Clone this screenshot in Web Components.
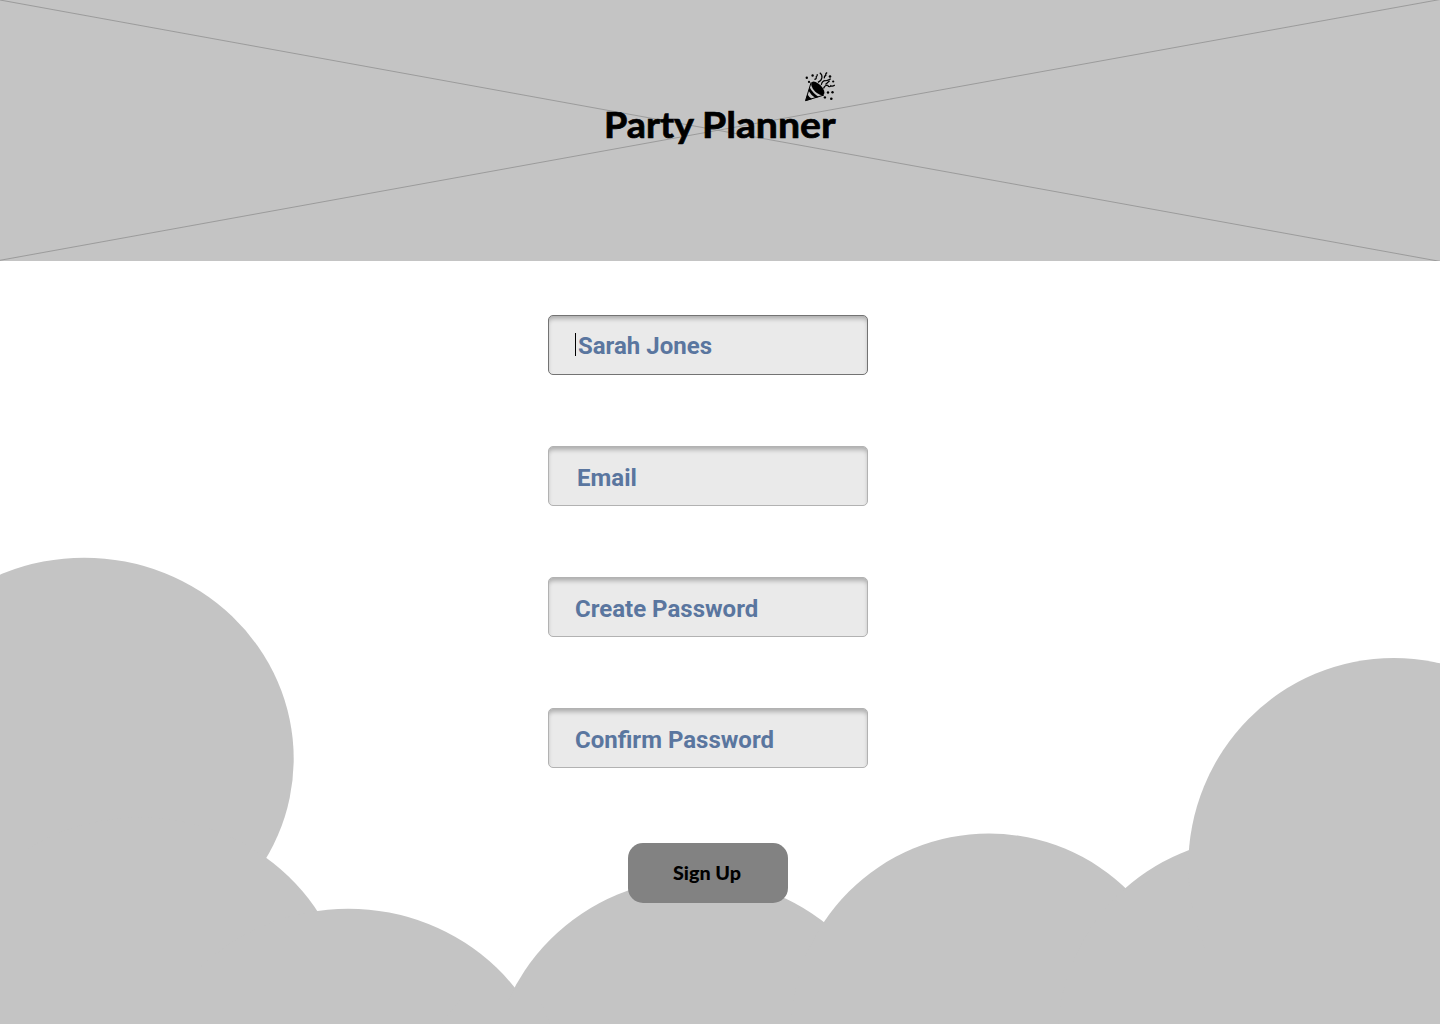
<!DOCTYPE html>
<html lang="en">
<head>
<meta charset="utf-8">
<title>Party Planner</title>
<style>
html, body { margin: 0; height: 100%; overflow: hidden; background: #fff; }
</style>
</head>
<body>
<party-page></party-page>
<script>
const define = (name, html) => {
  const template = document.createElement('template');
  template.innerHTML = html;
  customElements.define(name, class extends HTMLElement {
    constructor() {
      super();
      this.attachShadow({ mode: 'open' }).append(template.content.cloneNode(true));
    }
  });
};

define('party-icon', `
<style>:host{display:block;width:30px;height:30px} svg{display:block}</style>
<svg width="30" height="30" viewBox="0 0 30 30">
  <path d="M6.2 10.2L.5 28.7L19 23" fill="#c4c4c4" stroke="#000" stroke-width="1"/>
  <ellipse cx="12.8" cy="16.4" rx="8.6" ry="4.1" transform="rotate(46 12.8 16.4)"/>
  <path d="M4.6 15.2Q7.6 21 13.8 24.9L10.4 25.9Q6 23.2 3.5 18.8Z"/>
  <path d="M2.4 22.2Q4 25.3 7.2 26.9L.4 28.9Z"/>
  <g fill="none" stroke="#000" stroke-width="1.2">
    <path d="M9.4 7.4Q11.8 7 11.2 4.8Q12.6 4.2 12.2 2.2"/>
    <path d="M14.8.8C18.4 3.4 17.4 8.4 12.9 10.4"/>
    <path d="M22.2.7Q20.3 1.2 20.8 3.4Q18.9 4.2 19.4 6.4"/>
    <path d="M16.3 12.8Q17.3 8.8 20.2 8.7Q22.6 9 25.8 6.8"/>
    <path d="M18.5 16.5Q19.8 12.9 22.6 13.3Q24.5 16 25.8 13.7Q27.4 14.8 29.8 13.1"/>
    <path d="M20.5 12.5L24.6 8.7"/>
  </g>
  <circle cx="1.8" cy="5.7" r="1.2"/><circle cx="7.6" cy="3.5" r="1.2"/><circle cx="4" cy="9.9" r="1.1"/>
  <circle cx="25" cy="4.5" r="1.3"/><circle cx="28.2" cy="9.5" r="1.1"/><circle cx="23" cy="20.5" r="1.2"/>
  <circle cx="27.5" cy="20.2" r="1.2"/><circle cx="19.9" cy="25.4" r="1.2"/><circle cx="26.3" cy="26.8" r="1.3"/>
</svg>`);

define('party-header', `
<style>
:host{display:grid;height:261px;background:#c4c4c4;justify-items:center}
.cross,.brand{grid-area:1/1}
.cross{display:block;width:100%;height:261px}
.brand{width:230px;display:flex;flex-direction:column;align-items:flex-end;padding-top:72px;z-index:1}
.title{display:block;overflow:visible}
.title text{font:700 36px Lato,sans-serif;stroke:#000;stroke-width:.7px}
</style>
<svg class="cross" viewBox="0 0 1440 261"><path d="M0 0L1440 261.4M0 260.3L1440-.5" stroke="#969696" stroke-width=".9" fill="none"/></svg>
<div class="brand"><party-icon></party-icon>
<svg class="title" width="230" height="48"><text x="-1" y="35.5" textLength="90" lengthAdjust="spacingAndGlyphs">Party</text><text x="97" y="35.5" textLength="133.5" lengthAdjust="spacingAndGlyphs">Planner</text></svg></div>`);

define('cloud-bank', `
<style>:host{display:block;height:763px} svg{display:block}</style>
<svg width="1440" height="763" viewBox="0 261 1440 763" fill="#c4c4c4">
  <ellipse cx="84.2" cy="758.7" rx="209.5" ry="201"/>
  <ellipse cx="140" cy="1018.5" rx="209.8" ry="201"/>
  <ellipse cx="348.3" cy="1109.7" rx="209.5" ry="201"/>
  <circle cx="697" cy="1086.3" r="207.5"/>
  <circle cx="989" cy="1031.6" r="198.1"/>
  <circle cx="1257.7" cy="1038" r="200"/>
  <ellipse cx="1393.8" cy="866" rx="205.5" ry="208"/>
  <path d="M0 850H200V1024H0ZM460 1000H540L550 1024H440ZM1150 950H1440V1024H1150ZM840 960H930V1024H840Z"/>
</svg>`);

define('text-field', `
<style>
:host{box-sizing:border-box;display:flex;align-items:center;width:320px;height:60px;padding:4px 0 0 26px;border:1px solid #b2b2b2;border-radius:5px;background:#eaeaea;box-shadow:inset 0 4px 4px -1px rgba(0,0,0,.25);font:700 24px/28px Roboto,sans-serif;color:#5a769f}
:host([focused]){border-color:#737373;padding-top:2px}
.caret{display:none;width:1px;height:23px;margin:0 2px 3px 0;background:#000}
:host([focused]) .caret{display:block}
</style>
<span class="caret"></span><slot></slot>`);

define('sign-button', `
<style>
:host{display:flex;align-items:center;justify-content:center;width:160px;height:60px;border-radius:15px;background:#828282;color:#000}
svg{display:block;overflow:visible} text{font:900 18px Lato,sans-serif}
</style>
<svg width="70" height="24"><text x="0" y="18.5" textLength="68" lengthAdjust="spacingAndGlyphs">Sign Up</text></svg>`);

define('party-page', `
<style>
:host{display:grid;grid-template:261px 763px/1440px;width:1440px;height:1024px;overflow:hidden}
party-header{grid-area:1/1}
cloud-bank,form{grid-area:2/1}
form{z-index:1;width:320px;margin-left:548px;padding-top:54px;display:flex;flex-direction:column;gap:71px}
sign-button{margin:4px auto 0}
.email{padding-left:28px}
</style>
<party-header></party-header>
<cloud-bank></cloud-bank>
<form>
  <text-field focused>Sarah Jones</text-field>
  <text-field class="email">Email</text-field>
  <text-field>Create Password</text-field>
  <text-field>Confirm Password</text-field>
  <sign-button></sign-button>
</form>`);
</script>
</body>
</html>
